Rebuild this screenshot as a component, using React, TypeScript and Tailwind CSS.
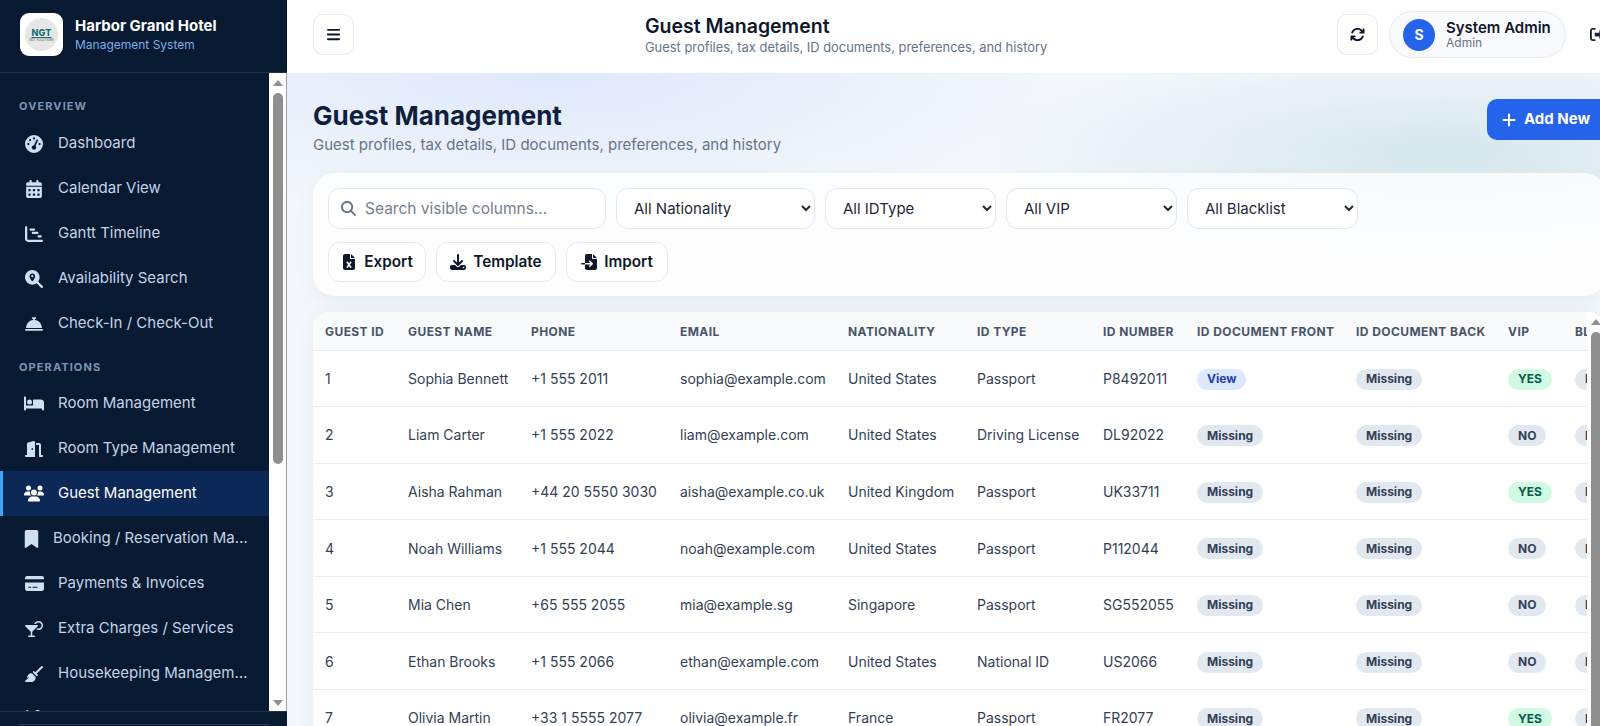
import type { ReactNode } from "react";
import {
  FaArrowsRotate,
  FaBars,
  FaBed,
  FaBellConcierge,
  FaBookmark,
  FaBroom,
  FaCalendarDays,
  FaChartGantt,
  FaCreditCard,
  FaDoorOpen,
  FaDownload,
  FaFileExcel,
  FaFileImport,
  FaGaugeHigh,
  FaMagnifyingGlass,
  FaMagnifyingGlassLocation,
  FaMartiniGlassCitrus,
  FaPlus,
  FaRightFromBracket,
  FaScrewdriverWrench,
  FaUsers,
} from "react-icons/fa6";

const guests = [
  { id: 1, name: "Sophia Bennett", phone: "+1 555 2011", email: "sophia@example.com", nat: "United States", type: "Passport", num: "P8492011", front: true, vip: true },
  { id: 2, name: "Liam Carter", phone: "+1 555 2022", email: "liam@example.com", nat: "United States", type: "Driving License", num: "DL92022", front: false, vip: false },
  { id: 3, name: "Aisha Rahman", phone: "+44 20 5550 3030", email: "aisha@example.co.uk", nat: "United Kingdom", type: "Passport", num: "UK33711", front: false, vip: true },
  { id: 4, name: "Noah Williams", phone: "+1 555 2044", email: "noah@example.com", nat: "United States", type: "Passport", num: "P112044", front: false, vip: false },
  { id: 5, name: "Mia Chen", phone: "+65 555 2055", email: "mia@example.sg", nat: "Singapore", type: "Passport", num: "SG552055", front: false, vip: false },
  { id: 6, name: "Ethan Brooks", phone: "+1 555 2066", email: "ethan@example.com", nat: "United States", type: "National ID", num: "US2066", front: false, vip: false },
  { id: 7, name: "Olivia Martin", phone: "+33 1 5555 2077", email: "olivia@example.fr", nat: "France", type: "Passport", num: "FR2077", front: false, vip: true },
];

const columns = [
  { label: "Guest ID", width: "w-[83px]" },
  { label: "Guest Name", width: "w-[123px]" },
  { label: "Phone", width: "w-[149px]" },
  { label: "Email", width: "w-[168px]" },
  { label: "Nationality", width: "w-[129px]" },
  { label: "ID Type", width: "w-[126px]" },
  { label: "ID Number", width: "w-[94px]" },
  { label: "ID Document Front", width: "w-[159px]" },
  { label: "ID Document Back", width: "w-[152px]" },
  { label: "VIP", width: "w-[67px]" },
  { label: "Blacklist", width: "w-[100px]" },
];

const overview = [
  { label: "Dashboard", icon: <FaGaugeHigh /> },
  { label: "Calendar View", icon: <FaCalendarDays /> },
  { label: "Gantt Timeline", icon: <FaChartGantt /> },
  { label: "Availability Search", icon: <FaMagnifyingGlassLocation /> },
  { label: "Check-In / Check-Out", icon: <FaBellConcierge /> },
];

const operations = [
  { label: "Room Management", icon: <FaBed className="text-[21px]" /> },
  { label: "Room Type Management", icon: <FaDoorOpen /> },
  { label: "Guest Management", icon: <FaUsers className="text-[21px]" />, active: true },
  { label: "Booking / Reservation Management", icon: <FaBookmark />, narrow: true },
  { label: "Payments & Invoices", icon: <FaCreditCard className="text-[19px]" /> },
  { label: "Extra Charges / Services", icon: <FaMartiniGlassCitrus /> },
  { label: "Housekeeping Management", icon: <FaBroom /> },
  { label: "Maintenance", icon: <FaScrewdriverWrench /> },
];

const NavItem = ({
  label,
  icon,
  active,
  narrow,
}: {
  label: string;
  icon: ReactNode;
  active?: boolean;
  narrow?: boolean;
}) => (
  <div
    className={`flex h-[45px] shrink-0 items-center gap-[14px] pr-[17px] text-[15px] ${
      active
        ? "border-l-[3px] border-[#38a9f2] bg-[#0c2856] pl-[21px] text-white"
        : "pl-[24px] text-[#c3d3e9]"
    }`}
  >
    <span
      className={`flex shrink-0 justify-center text-[18px] ${
        narrow ? "w-[15px]" : "w-[20px]"
      } ${active ? "text-white" : "text-[#d0def2]"}`}
    >
      {icon}
    </span>
    <span className="truncate">{label}</span>
  </div>
);

const Badge = ({ kind, children }: { kind: "blue" | "gray" | "green"; children: ReactNode }) => (
  <span
    className={`inline-flex h-[21px] items-center rounded-full px-[10px] text-[12px] font-bold ${
      kind === "blue"
        ? "bg-[#dbe8fd] text-[#1e40af]"
        : kind === "green"
          ? "bg-[#d1fae5] text-[#065f46]"
          : "bg-[#e2e8f0] text-[#334155]"
    }`}
  >
    {children}
  </span>
);

const ToolButton = ({ icon, label, width }: { icon: ReactNode; label: string; width: string }) => (
  <button className={`flex h-[40px] items-center justify-center gap-[7px] rounded-[12px] border border-[#e5e9f0] bg-white text-[15.3px] font-semibold text-[#0f172a] ${width}`}>
    <span className="text-[16px]">{icon}</span>
    {label}
  </button>
);

const FilterSelect = ({ label, width }: { label: string; width: string }) => (
  <select className={`h-[41px] rounded-[12px] border border-[#e2e8f0] bg-white pl-[13px] pr-[4px] text-[15px] text-[#1e293b] ${width}`}>
    <option>{label}</option>
  </select>
);

const Scrollbar = ({ thumb }: { thumb: string }) => (
  <div className="flex w-[17px] shrink-0 flex-col items-center bg-white">
    <div className="mt-[7px] h-0 w-0 border-x-[5px] border-b-[6px] border-x-transparent border-b-[#8f8f8f]" />
    <div className={`mt-[7px] w-[10px] rounded-full bg-[#8f8f8f] ${thumb}`} />
    <div className="flex-1" />
    <div className="mb-[5px] h-0 w-0 border-x-[5px] border-t-[6px] border-x-transparent border-t-[#8f8f8f]" />
  </div>
);

const Sidebar = () => (
  <aside className="flex h-full w-[287px] shrink-0 flex-col bg-[#081a32]">
    <div className="flex h-[73px] shrink-0 items-center gap-[12px] border-b border-white/10 pb-[3px] pl-[20px]">
      <div className="flex h-[43px] w-[43px] items-center justify-center rounded-[9px] bg-white">
        <div className="flex h-[33px] w-[33px] flex-col items-center justify-center rounded-full bg-[#e6e8e8] text-[#1d6f73]">
          <span className="text-[9px] font-extrabold leading-[10px] tracking-wide underline">NGT</span>
          <span className="text-[3px] leading-[4px] text-[#555]">NGT SOLUTIONS</span>
        </div>
      </div>
      <div>
        <div className="text-[15px] font-bold leading-[20px] text-white">Harbor Grand Hotel</div>
        <div className="text-[12px] leading-[17px] text-[#78ade9]">Management System</div>
      </div>
    </div>
    <div className="flex min-h-0 flex-1 border-r border-[#9aa0a8]">
      <nav className="flex min-w-0 flex-1 flex-col overflow-hidden pt-[26px]">
        <div className="mb-[8px] shrink-0 pl-[19px] text-[11px] font-bold leading-[14px] tracking-[0.1em] text-[#7c94b6]">
          OVERVIEW
        </div>
        {overview.map((item) => (
          <NavItem key={item.label} {...item} />
        ))}
        <div className="mb-[7px] mt-[14px] shrink-0 pl-[19px] text-[11px] font-bold leading-[14px] tracking-[0.1em] text-[#7c94b6]">
          OPERATIONS
        </div>
        {operations.map((item) => (
          <NavItem key={item.label} {...item} />
        ))}
      </nav>
      <Scrollbar thumb="h-[371px]" />
    </div>
    <div className="h-[15px] shrink-0 border-t border-white/10 pt-[12px]">
      <div className="mx-[18px] border-t border-white/15" />
    </div>
  </aside>
);

const Header = () => (
  <header className="flex h-[73px] shrink-0 items-center bg-white pb-[4px] pl-[26px]">
    <button className="flex h-[41px] w-[41px] items-center justify-center rounded-[10px] border border-[#e5e9f0] text-[15px] text-[#0f172a]">
      <FaBars />
    </button>
    <div className="ml-[291px]">
      <div className="text-[19.5px] font-semibold leading-[26px] text-[#0f172a]">Guest Management</div>
      <div className="text-[12.9px] leading-[18px] text-[#64748b]">
        Guest profiles, tax details, ID documents, preferences, and history
      </div>
    </div>
    <div className="ml-auto flex items-center">
      <button className="flex h-[41px] w-[41px] items-center justify-center rounded-[10px] border border-[#e5e9f0] text-[15px] text-[#0f172a]">
        <FaArrowsRotate />
      </button>
      <div className="ml-[11px] flex h-[47px] w-[177px] items-center gap-[11px] rounded-full border border-[#e5e9f0] bg-[#f8fafc] pl-[13px]">
        <div className="flex h-[32px] w-[32px] items-center justify-center rounded-full bg-[#2563eb] text-[14px] font-bold text-white">
          S
        </div>
        <div>
          <div className="text-[15px] font-semibold leading-[17px] text-[#0f172a]">System Admin</div>
          <div className="text-[12px] leading-[14px] text-[#64748b]">Admin</div>
        </div>
      </div>
      <div className="ml-[24px] w-[10px] overflow-hidden text-[15px] text-[#1e293b]">
        <FaRightFromBracket />
      </div>
    </div>
  </header>
);

const GuestTable = () => (
  <div className="mt-[16px] flex w-[1291px] overflow-hidden rounded-[16px] bg-white shadow-[0_4px_20px_rgba(15,23,42,0.06)]">
    <div className="min-w-0 flex-1 overflow-hidden">
      <table className="w-[1350px] table-fixed border-collapse whitespace-nowrap text-left">
        <thead>
          <tr className="h-[38px] border-b border-[#e8ecf2] bg-[#f8fafc]">
            {columns.map((col) => (
              <th
                key={col.label}
                className={`px-[12px] pt-[2px] text-[12px] font-bold uppercase tracking-[0.035em] text-[#475569] ${col.width}`}
              >
                {col.label}
              </th>
            ))}
          </tr>
        </thead>
        <tbody className="text-[14px] text-[#334155]">
          {guests.map((g) => (
            <tr key={g.id} className="h-[56.6px] border-b border-[#e8ecf2]">
              <td className="px-[12px]">{g.id}</td>
              <td className="px-[12px]">{g.name}</td>
              <td className="px-[12px]">{g.phone}</td>
              <td className="px-[12px]">{g.email}</td>
              <td className="px-[12px]">{g.nat}</td>
              <td className="px-[12px]">{g.type}</td>
              <td className="px-[12px]">{g.num}</td>
              <td className="px-[12px]">
                {g.front ? <Badge kind="blue">View</Badge> : <Badge kind="gray">Missing</Badge>}
              </td>
              <td className="px-[12px]">
                <Badge kind="gray">Missing</Badge>
              </td>
              <td className="px-[12px]">
                {g.vip ? <Badge kind="green">YES</Badge> : <Badge kind="gray">NO</Badge>}
              </td>
              <td className="px-[12px]">
                <Badge kind="gray">NO</Badge>
              </td>
            </tr>
          ))}
        </tbody>
      </table>
    </div>
    <Scrollbar thumb="h-[600px]" />
  </div>
);

export default function App() {
  return (
    <div className="flex h-screen w-full overflow-hidden bg-white font-['Inter',sans-serif]">
      <Sidebar />
      <div className="flex min-w-0 flex-1 flex-col">
        <Header />
        <main className="min-h-0 flex-1 overflow-hidden bg-[#f4f7fb] bg-[radial-gradient(ellipse_520px_150px_at_20%_0%,#dfe8fb,transparent),radial-gradient(ellipse_460px_110px_at_88%_12%,#d6e7ee,transparent)] pl-[26px] pt-[27px]">
          <div className="w-[1293px]">
            <div className="flex items-start justify-between">
              <div>
                <h1 className="text-[26px] font-bold leading-[32px] text-[#0f1f3d]">Guest Management</h1>
                <p className="mt-[2px] text-[15px] leading-[22px] text-[#64748b]">
                  Guest profiles, tax details, ID documents, preferences, and history
                </p>
              </div>
              <button className="-mr-[3px] -mt-[1px] flex h-[41px] w-[122px] shrink-0 items-center gap-[7px] rounded-[10px] bg-[#2563eb] pl-[14px] text-[15px] font-bold text-white">
                <FaPlus className="text-[16px]" />
                Add New
              </button>
            </div>
            <section className="mt-[17px] rounded-[22px] bg-white/80 px-[15px] pb-[14px] pt-[15px] shadow-[0_8px_24px_rgba(15,23,42,0.05)]">
              <div className="flex gap-[10px]">
                <div className="flex h-[41px] w-[278px] items-center gap-[9px] rounded-[12px] border border-[#e2e8f0] bg-white pl-[12px] text-[#64748b]">
                  <FaMagnifyingGlass className="text-[15px]" />
                  <span className="text-[15.5px] text-[#758091]">Search visible columns...</span>
                </div>
                <FilterSelect label="All Nationality" width="w-[199px]" />
                <FilterSelect label="All IDType" width="w-[171px]" />
                <FilterSelect label="All VIP" width="w-[171px]" />
                <FilterSelect label="All Blacklist" width="w-[171px]" />
              </div>
              <div className="mt-[13px] flex gap-[10px]">
                <ToolButton icon={<FaFileExcel />} label="Export" width="w-[98px]" />
                <ToolButton icon={<FaDownload />} label="Template" width="w-[120px]" />
                <ToolButton icon={<FaFileImport />} label="Import" width="w-[102px]" />
              </div>
            </section>
            <GuestTable />
          </div>
        </main>
      </div>
    </div>
  );
}
